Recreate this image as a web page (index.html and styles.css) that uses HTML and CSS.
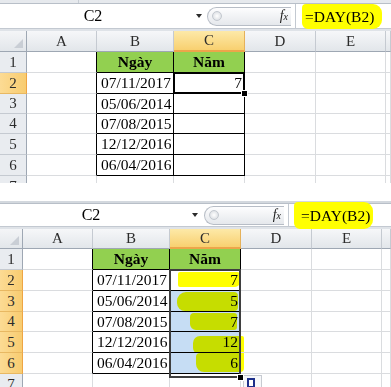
FILE: index.html
```html
<!DOCTYPE html>
<html>

  <head>
    <link rel="stylesheet" href="styles.css">
  </head>

  <body>
    <!-- before: only C2 filled -->
    <div class="sheet sheet-1">
      <div class="ribbon"><span class="ribbon-sep"></span></div>
      <div class="fbar">
        <div class="namebox"><span class="name">C2</span><span class="dd"></span></div>
        <div class="pill"><span class="knob"></span><span class="fx"><i>f</i><small>x</small></span></div>
        <div class="formula"><span class="hl">=DAY(B2)</span></div>
      </div>
      <div class="grid">
        <div class="corner"></div>
        <div class="ch">A</div><div class="ch">B</div><div class="ch sel">C</div><div class="ch">D</div><div class="ch">E</div><div class="ch"></div>

        <div class="rh">1</div><div class="c edge"></div><div class="c t hd">Ngày</div><div class="c t hd cur">Năm</div><div class="c"></div><div class="c"></div><div class="c"></div>
        <div class="rh sel">2</div><div class="c edge"></div><div class="c t date">07/11/2017</div><div class="c t num">7<span class="active"></span></div><div class="c"></div><div class="c"></div><div class="c"></div>
        <div class="rh">3</div><div class="c edge"></div><div class="c t date">05/06/2014</div><div class="c t"></div><div class="c"></div><div class="c"></div><div class="c"></div>
        <div class="rh">4</div><div class="c edge"></div><div class="c t date">07/08/2015</div><div class="c t"></div><div class="c"></div><div class="c"></div><div class="c"></div>
        <div class="rh">5</div><div class="c edge"></div><div class="c t date">12/12/2016</div><div class="c t"></div><div class="c"></div><div class="c"></div><div class="c"></div>
        <div class="rh">6</div><div class="c edge"></div><div class="c t date">06/04/2016</div><div class="c t"></div><div class="c"></div><div class="c"></div><div class="c"></div>
        <div class="rh">7</div><div class="c"></div><div class="c"></div><div class="c"></div><div class="c"></div><div class="c"></div><div class="c"></div>
      </div>
    </div>

    <!-- after: formula filled down C2:C6 -->
    <div class="sheet sheet-2">
      <div class="ribbon"></div>
      <div class="fbar">
        <div class="namebox"><span class="name">C2</span><span class="dd"></span></div>
        <div class="pill"><span class="knob"></span><span class="fx"><i>f</i><small>x</small></span></div>
        <div class="formula"><span class="hl">=DAY(B2)</span></div>
      </div>
      <div class="grid">
        <div class="corner"></div>
        <div class="ch">A</div><div class="ch">B</div><div class="ch sel">C</div><div class="ch">D</div><div class="ch">E</div><div class="ch"></div>

        <div class="rh">1</div><div class="c edge"></div><div class="c t hd">Ngày</div><div class="c t hd cur">Năm</div><div class="c"></div><div class="c"></div><div class="c"></div>
        <div class="rh sel">2</div><div class="c edge"></div><div class="c t date">07/11/2017</div><div class="c t num"><span class="mark m2"></span>7<span class="range"></span></div><div class="c"></div><div class="c"></div><div class="c"></div>
        <div class="rh sel">3</div><div class="c edge"></div><div class="c t date">05/06/2014</div><div class="c t num blue"><span class="mark m3"></span>5</div><div class="c"></div><div class="c"></div><div class="c"></div>
        <div class="rh sel">4</div><div class="c edge"></div><div class="c t date">07/08/2015</div><div class="c t num blue"><span class="mark m4"></span>7</div><div class="c"></div><div class="c"></div><div class="c"></div>
        <div class="rh sel">5</div><div class="c edge"></div><div class="c t date">12/12/2016</div><div class="c t num blue"><span class="mark m5"></span>12</div><div class="c"></div><div class="c"></div><div class="c"></div>
        <div class="rh sel">6</div><div class="c edge"></div><div class="c t date">06/04/2016</div><div class="c t num blue"><span class="mark m6"></span>6</div><div class="c"></div><div class="c"></div><div class="c"></div>
        <div class="rh">7</div><div class="c"></div><div class="c"></div><div class="c"></div><div class="c"><span class="paste"></span></div><div class="c"></div><div class="c"></div>
      </div>
    </div>
  </body>

</html>
```

FILE: styles.css
```css
body {
  margin: 0;
  background: #fff;
  color: #000;
  font-family: "Liberation Serif", "Times New Roman", serif;
}

.sheet {
  overflow: hidden;
  background: #dfe3e8;
}

.sheet-1 {
  height: 183px;
  margin-bottom: 18px;
}

.sheet-2 {
  height: 186px;
}

/* bottom of the ribbon */
.ribbon {
  display: flex;
  height: 3px;
  background: #e6e9ed;
  border-bottom: 1px solid #b8bfc8;
}

.ribbon-sep {
  width: 78px;
  border-right: 1px solid #c7cdd4;
}

.sheet-2 .ribbon {
  height: 2px;
  background: #d3d8de;
}

/* formula bar */
.fbar {
  display: flex;
  align-items: center;
  height: 24px;
  margin-bottom: 2px;
  background: #fff;
  border-bottom: 1px solid #c3c9d1;
}

.sheet-2 .fbar {
  height: 22px;
  margin-bottom: 2px;
}

.namebox {
  display: flex;
  align-items: center;
}

.name {
  width: 186px;
  text-align: center;
  font-size: 16px;
}

.sheet-2 .name {
  width: 182px;
}

.dd {
  margin-left: 10px;
  border-left: 3.5px solid transparent;
  border-right: 3.5px solid transparent;
  border-top: 4px solid #2b2b2b;
}

.pill {
  display: flex;
  align-items: center;
  justify-content: space-between;
  box-sizing: border-box;
  width: 84px;
  height: 19px;
  margin-left: 5px;
  padding: 0 3px 0 4px;
  border: 1px solid #b7bdc6;
  border-right: none;
  border-radius: 10px 0 0 10px;
  background: linear-gradient(#fdfdfe, #e5e8ec);
}

.sheet-2 .pill {
  margin-left: 6px;
  width: 80px;
}

.knob {
  width: 8px;
  height: 8px;
  border-radius: 50%;
  border: 1px solid #c3c8cf;
  background: radial-gradient(#ffffff, #d3d7dd);
}

.fx {
  font-size: 14px;
  color: #222;
}

.fx small {
  font-size: 10px;
  font-style: italic;
}

.formula {
  flex: 1;
  align-self: stretch;
  display: flex;
  align-items: center;
  margin-left: 4px;
  border-left: 1px solid #c3c9d1;
}

.hl {
  margin-left: 6px;
  padding: 0 8px 0 3px;
  font-size: 15.5px;
  line-height: 25px;
  background: #ffff00;
  border-radius: 4px 9px 9px 6px;
}

.sheet-2 .hl {
  margin-left: 5px;
  padding: 0 3px 0 7px;
  line-height: 27px;
}

/* worksheet */
.grid {
  display: grid;
  background: #fff;
}

.sheet-1 .grid {
  grid-template-columns: 27px 70px 77px 71px 71px 70px 5px;
  grid-template-rows: 21px 21px 21px 20px 20px 21px 21px 21px;
}

.sheet-2 .grid {
  grid-template-columns: 23px 70px 77px 71px 71px 70px 9px;
  grid-template-rows: 20px 21px 21px 21px 20px 21px 21px 21px;
}

.grid>div {
  position: relative;
  display: flex;
  align-items: center;
  box-sizing: border-box;
  border-right: 1px solid #dadcdf;
  border-bottom: 1px solid #dadcdf;
  font-size: 15.5px;
}

.grid .corner,
.grid .ch,
.grid .rh {
  justify-content: center;
  color: #2b2b2b;
  font-size: 15px;
}

.grid .corner {
  background: linear-gradient(#f4f5f7, #e2e6ea);
  border-right-color: #9ea7b3;
  border-bottom-color: #9ea7b3;
}

.grid .corner::after {
  content: "";
  position: absolute;
  right: 3px;
  bottom: 3px;
  width: 9px;
  height: 9px;
  background: #c9ced5;
  clip-path: polygon(100% 0, 100% 100%, 0 100%);
}

.grid .ch {
  background: linear-gradient(#f6f7f9, #e2e6ea);
  border-right-color: #c5cad1;
  border-bottom-color: #9ea7b3;
}

.grid .rh {
  background: #e9ecf0;
  border-right-color: #9ea7b3;
  border-bottom-color: #c5cad1;
}

.grid .ch.sel {
  background: linear-gradient(#fde9a8, #f8d070);
  border-right-color: #e5b15a;
  border-bottom: 2px solid #eda54a;
}

.grid .rh.sel {
  background: linear-gradient(90deg, #fcdb94, #f8cc70);
  border-right-color: #eea544;
  border-bottom-color: #e8b862;
}

.grid .edge {
  border-right-color: #000;
}

.grid .t {
  border-right-color: #000;
  border-bottom-color: #000;
}

.grid .hd {
  justify-content: center;
  font-weight: bold;
  background: #92d050;
}

.grid .hd.cur {
  border-bottom-color: #7d66a9;
}

.date {
  padding-left: 4px;
}

.num {
  justify-content: flex-end;
  padding-right: 2px;
}

.grid .blue {
  background: #c6ddf4;
}

/* selection frames */
.active,
.range {
  position: absolute;
  left: -1px;
  top: -1px;
  right: -1px;
  z-index: 2;
  border: 2px solid #000;
}

.active {
  bottom: -1px;
}

.range {
  height: 105px;
  border-color: #3f3f3f;
}

.active::after,
.range::after {
  content: "";
  position: absolute;
  right: -5px;
  bottom: -5px;
  width: 5px;
  height: 5px;
  background: #000;
  border: 1px solid #fff;
}

/* marker scribbles */
.mark {
  position: absolute;
  background: #ffff00;
  mix-blend-mode: multiply;
}

.m2 {
  left: 8px;
  top: 2px;
  width: 62px;
  height: 15px;
  border-radius: 2px 3px 5px 2px;
}

.m3 {
  left: 7px;
  top: 1px;
  width: 61px;
  height: 19px;
  border-radius: 9px 4px 4px 8px;
}

.m4 {
  left: 20px;
  top: 1px;
  width: 47px;
  height: 17px;
  border-radius: 4px 3px 3px 6px;
}

.m5 {
  left: 23px;
  top: 4px;
  width: 51px;
  height: 18px;
  border-radius: 7px 2px 0 6px;
}

.m6 {
  left: 26px;
  top: 0;
  width: 48px;
  height: 19px;
  border-radius: 4px 0 4px 8px;
}

/* paste options button */
.paste {
  position: absolute;
  left: 2px;
  top: 1px;
  width: 17px;
  height: 14px;
  border: 1px solid #c7cbd1;
  background: #f7f8fa;
}

.paste::before {
  content: "";
  position: absolute;
  left: 3px;
  top: 2px;
  width: 4px;
  height: 6px;
  border: 2px solid #1d2f8a;
  background: #fff;
}
```
